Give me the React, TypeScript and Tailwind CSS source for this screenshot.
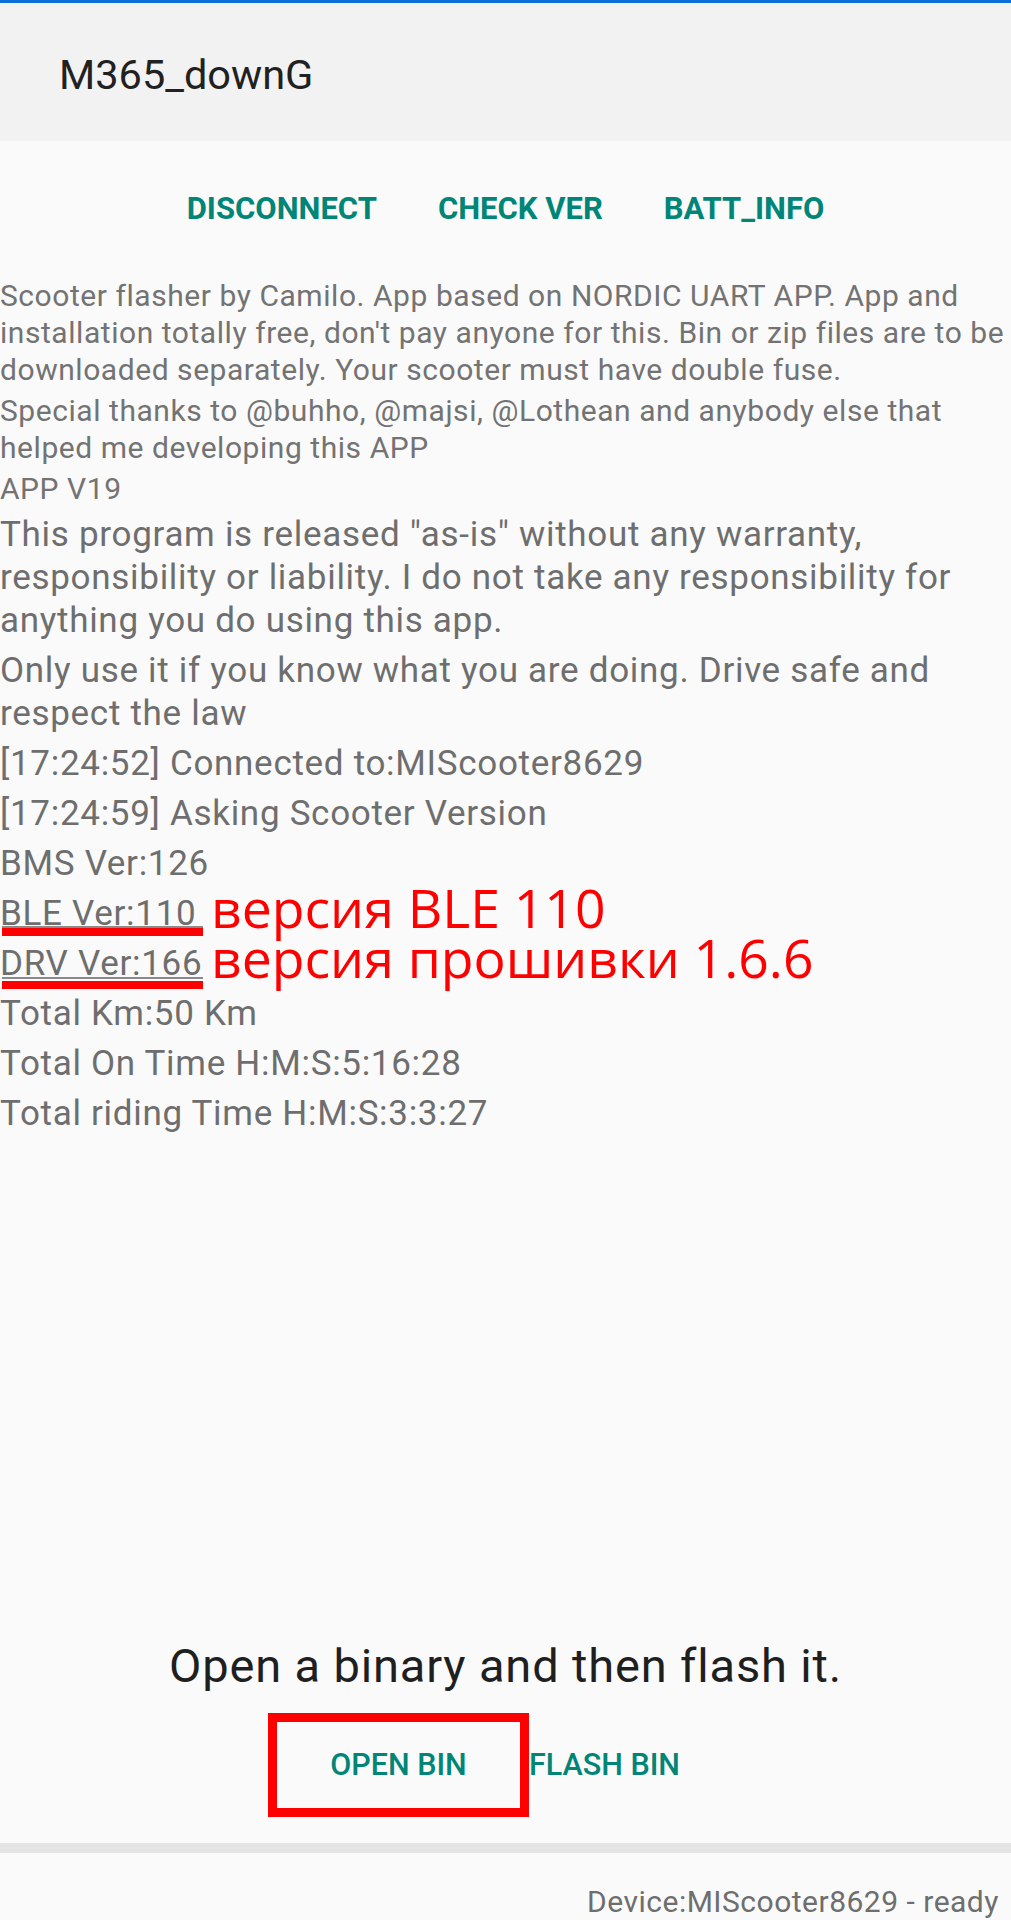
import React from 'react';

const roboto = { fontFamily: 'Roboto, "Noto Sans", sans-serif' };

// log lines under the disclaimer
const logLines = [
  '[17:24:52] Connected to:MIScooter8629',
  '[17:24:59] Asking Scooter Version',
  'BMS Ver:126',
];

const totals = [
  'Total Km:50 Km',
  'Total On Time H:M:S:5:16:28',
  'Total riding Time H:M:S:3:3:27',
];

function AnnotatedLine({ label, note, grayTop, redTop }: { label: string; note: string; grayTop: string; redTop: string }) {
  return (
    <div className="relative whitespace-nowrap leading-[43px]">
      <span className="inline-block w-[211px]">{label}</span>
      <span className="font-['Open_Sans',sans-serif] text-[53.5px] tracking-normal leading-[0px] text-[#ff0000] relative top-[3px]">{note}</span>
      {/* annotation strokes drawn over the screenshot */}
      <div className={`absolute left-[2px] w-[201px] h-[2px] bg-[#8a8a8a] ${grayTop}`} />
      <div className={`absolute left-[2px] w-[201px] h-[8px] bg-[#ff0000] ${redTop}`} />
    </div>
  );
}

export default function App() {
  return (
    <div className="min-h-[1920px] w-[1011px] flex flex-col bg-[#fafafa]" style={roboto}>
      <div className="h-[3px] bg-[#0a6fd8]" />
      <header className="h-[138px] bg-[#f2f2f2] flex items-center pl-[59px] pt-[6px]">
        <h1 className="text-[41.5px] text-[#212121] font-normal">M365_downG</h1>
      </header>

      {/* Top actions */}
      <div className="h-[136px] flex items-center justify-center gap-[61px] text-[#008577] font-bold text-[31px]">
        <button>DISCONNECT</button>
        <button>CHECK VER</button>
        <button>BATT_INFO</button>
      </div>

      {/* Info text */}
      <div className="flex flex-col gap-[4px] text-[30px] tracking-[0.55px] leading-[37px] text-[#737373] whitespace-nowrap">
        <p>
          Scooter flasher by Camilo. App based on NORDIC UART APP. App and
          <br />
          installation totally free, don't pay anyone for this. Bin or zip files are to be
          <br />
          downloaded separately. Your scooter must have double fuse.
        </p>
        <p>
          Special thanks to @buhho, @majsi, @Lothean and anybody else that
          <br />
          helped me developing this APP
        </p>
        <p>APP V19</p>
      </div>

      <div className="mt-[6px] flex flex-col gap-[7px] text-[35px] tracking-[0.7px] leading-[43px] text-[#6e6e6e] whitespace-nowrap">
        <p>
          This program is released "as-is" without any warranty,
          <br />
          responsibility or liability. I do not take any responsibility for
          <br />
          anything you do using this app.
        </p>
        <p>
          Only use it if you know what you are doing. Drive safe and
          <br />
          respect the law
        </p>
        {logLines.map((l) => (
          <p key={l}>{l}</p>
        ))}
        <AnnotatedLine label="BLE Ver:110" note="версия BLE 110" grayTop="top-[34px]" redTop="top-[36px]" />
        <AnnotatedLine label="DRV Ver:166" note="версия прошивки 1.6.6" grayTop="top-[35px]" redTop="top-[39px]" />
        {totals.map((l) => (
          <p key={l}>{l}</p>
        ))}
      </div>

      <div className="flex-1" />

      {/* Flash section */}
      <p className="text-center text-[47px] tracking-[0.85px] leading-[56px] text-[#1f1f1f]">Open a binary and then flash it.</p>
      <div className="mt-[19px] flex items-center pl-[268px]">
        <div className="w-[261px] h-[104px] border-[9px] border-[#ff0000] flex items-center justify-center">
          <button className="text-[30.5px] font-medium text-[#008577]">OPEN BIN</button>
        </div>
        <button className="text-[30.5px] font-medium text-[#008577]">FLASH BIN</button>
      </div>

      <div className="mt-[26px] h-[10px] bg-[#e4e4e4]" />
      <div className="h-[67px] pt-[31px] pr-[12px] text-right text-[30px] tracking-[0.5px] leading-[36px] text-[#6e6e6e]">
        Device:MIScooter8629 - ready
      </div>
    </div>
  );
}
